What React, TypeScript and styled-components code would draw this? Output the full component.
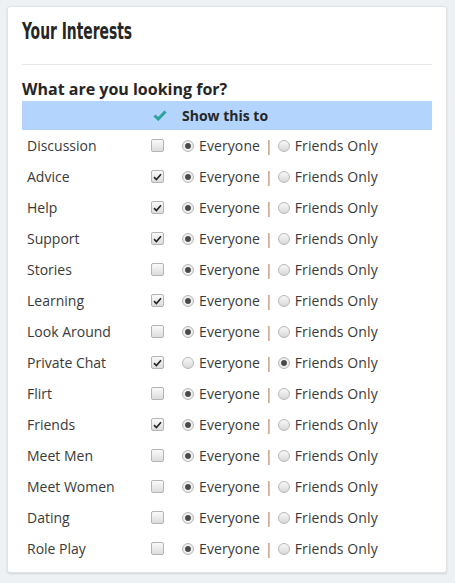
import styled, { createGlobalStyle } from 'styled-components';

const GlobalStyle = createGlobalStyle`
  body {
    margin: 0;
    background: #eef1f4;
    font-family: 'Open Sans', 'Liberation Sans', sans-serif;
    color: #333;
  }
`;

const Page = styled.div`
  padding: 6px 8px 10px 7px;
`;

const Card = styled.div`
  background: #fff;
  border: 1px solid #dfe3e7;
  border-radius: 3px;
  box-shadow: 0 1px 2px rgb(0 0 0 / 12%);
  padding: 0 14px 8px 14px;
`;

const Title = styled.h2`
  margin: 0;
  height: 58px;
  box-sizing: border-box;
  padding-top: 12px;
  border-bottom: 1px solid #e8e8e8;
  line-height: 24px;
`;

const TitleText = styled.span`
  display: block;
  font-family: 'DejaVu Sans Condensed', 'DejaVu Sans', sans-serif;
  font-stretch: condensed;
  font-weight: 700;
  font-size: 23px;
  line-height: 24px;
  color: #262626;
  transform: scaleX(0.67);
  transform-origin: left center;
  white-space: nowrap;
`;

const Heading = styled.h3`
  margin: 13px 0 0 0;
  font-size: 16px;
  font-weight: 700;
  line-height: 22px;
  color: #262626;
`;

const Table = styled.div`
  display: grid;
  grid-template-columns: 129px 31px 1fr;
  font-size: 14px;
  margin-top: 1px;
`;

const HeaderCell = styled.div`
  background: #b3d4fc;
  height: 29px;
  display: flex;
  align-items: center;
  font-weight: 700;
  color: #262626;
`;

const Cell = styled.div`
  height: 31px;
  display: flex;
  align-items: center;
  color: #3a3a3a;
`;

const Label = styled(Cell)`
  padding-left: 5px;
`;

const Box = styled.span`
  width: 11px;
  height: 11px;
  border: 1px solid #b4b4b4;
  border-radius: 2px;
  background: linear-gradient(#fafafa, #dcdcdc);
  display: inline-flex;
  align-items: center;
  justify-content: center;
`;

const Radio = styled.span<{ $on: boolean }>`
  width: 10px;
  height: 10px;
  border: 1px solid #b8b8b8;
  border-radius: 50%;
  background: ${(p) =>
    p.$on
      ? 'radial-gradient(circle, #4a4a4a 0 2.2px, #6a6a6a 2.8px, #f2f2f2 3.3px, #dedede 100%)'
      : 'linear-gradient(#f8f8f8, #d8d8d8)'};
  margin-right: 5px;
  flex-shrink: 0;
`;

const Sep = styled.span`
  color: #808080;
  margin: 0 5px 0 5px;
`;

const RadioText = styled.span`
  letter-spacing: 0.1px;
`;

const Tick = () => (
  <svg width="9" height="8" viewBox="0 0 9 8">
    <path d="M1 4.2 L3.4 6.5 L8 1.2" fill="none" stroke="#222" strokeWidth="1.6" />
  </svg>
);

const BigTick = () => (
  <svg width="14" height="11" viewBox="0 0 14 11" style={{ marginLeft: '2px' }}>
    <path d="M1.5 5.5 L5.2 9 L12.5 1.5" fill="none" stroke="#2ba39a" strokeWidth="3" />
  </svg>
);

const rows: [string, boolean, boolean][] = [
  ['Discussion', false, true],
  ['Advice', true, true],
  ['Help', true, true],
  ['Support', true, true],
  ['Stories', false, true],
  ['Learning', true, true],
  ['Look Around', false, true],
  ['Private Chat', true, false],
  ['Flirt', false, true],
  ['Friends', true, true],
  ['Meet Men', false, true],
  ['Meet Women', false, true],
  ['Dating', false, true],
  ['Role Play', false, true],
];

export default function App() {
  return (
    <Page>
      <GlobalStyle />
      <Card>
        <Title>
          <TitleText>Your Interests</TitleText>
        </Title>
        <Heading>What are you looking for?</Heading>
        <Table>
          <HeaderCell />
          <HeaderCell>
            <BigTick />
          </HeaderCell>
          <HeaderCell>Show this to</HeaderCell>
          {rows.map(([name, checked, everyone]) => [
            <Label key={name + 'l'}>{name}</Label>,
            <Cell key={name + 'c'}>
              <Box>{checked && <Tick />}</Box>
            </Cell>,
            <Cell key={name + 'r'}>
              <Radio $on={everyone} />
              <RadioText>Everyone</RadioText>
              <Sep>|</Sep>
              <Radio $on={!everyone} />
              <RadioText>Friends Only</RadioText>
            </Cell>,
          ])}
        </Table>
      </Card>
    </Page>
  );
}
